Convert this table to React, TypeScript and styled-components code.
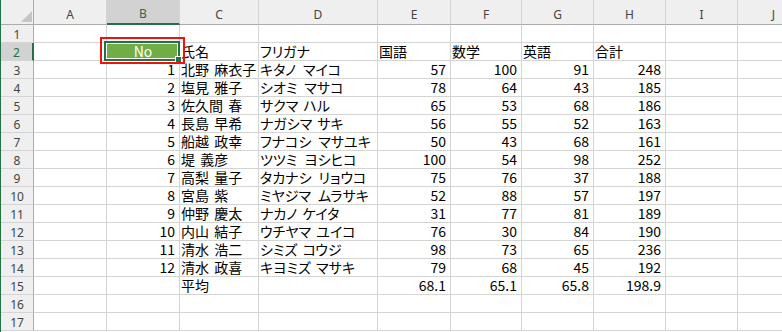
import React from "react";
import styled, { createGlobalStyle, css } from "styled-components";

const GlobalStyle = createGlobalStyle`
  html, body {
    margin: 0;
    padding: 0;
    background: #fff;
    overflow: hidden;
  }
`;

type Row = [string, string, string, string, string, string, string];

const COLS = ["A", "B", "C", "D", "E", "F", "G", "H", "I", "J"];
const WIDTHS = [73, 73, 79, 119, 73, 71, 72, 72, 72, 72];
const ROW_COUNT = 17;

// wide gap between family and given name in some furigana
const W = "\u2002";

const HEAD: Row = ["No", "氏名", "フリガナ", "国語", "数学", "英語", "合計"];

const DATA: Row[] = [
    ["1", "北野 麻衣子", `キタノ${W}マイコ`, "57", "100", "91", "248"],
    ["2", "塩見 雅子", `シオミ${W}マサコ`, "78", "64", "43", "185"],
    ["3", "佐久間 春", "サクマ ハル", "65", "53", "68", "186"],
    ["4", "長島 早希", "ナガシマ サキ", "56", "55", "52", "163"],
    ["5", "船越 政幸", `フナコシ${W}マサユキ`, "50", "43", "68", "161"],
    ["6", "堤 義彦", `ツツミ${W}ヨシヒコ`, "100", "54", "98", "252"],
    ["7", "高梨 量子", `タカナシ${W}リョウコ`, "75", "76", "37", "188"],
    ["8", "宮島 紫", `ミヤジマ${W}ムラサキ`, "52", "88", "57", "197"],
    ["9", "仲野 慶太", "ナカノ ケイタ", "31", "77", "81", "189"],
    ["10", "内山 結子", "ウチヤマ ユイコ", "76", "30", "84", "190"],
    ["11", "清水 浩二", "シミズ コウジ", "98", "73", "65", "236"],
    ["12", "清水 政喜", "キヨミズ マサキ", "79", "68", "45", "192"],
];

const AVERAGE: Row = ["", "平均", "", "68.1", "65.1", "65.8", "198.9"];

const Window = styled.div`
    width: 782px;
    height: 332px;
    overflow: hidden;
    box-sizing: border-box;
    border-left: 1px solid #217346;
    background: #fff;
`;

const Sheet = styled.div`
    display: grid;
    grid-template-columns: 33px ${WIDTHS.map((w) => `${w}px`).join(" ")};
    grid-template-rows: 25px repeat(${ROW_COUNT}, 18px);
    font-family: "Noto Sans CJK JP", sans-serif;
`;

const headerBase = css`
    box-sizing: border-box;
    display: flex;
    align-items: center;
    justify-content: center;
    background: #efefef;
    color: #444;
    font-family: "Noto Sans", sans-serif;
    font-size: 12px;
`;

const Corner = styled.div`
    ${headerBase}
    position: relative;
    border-right: 1px solid #ababab;
    border-bottom: 1px solid #ababab;
`;

const CornerMark = styled.svg`
    position: absolute;
    right: 1px;
    bottom: 2px;
`;

const ColHeader = styled.div<{ $active?: boolean }>`
    ${headerBase}
    padding-top: 4px;
    border-right: 1px solid #d4d4d4;
    border-bottom: 1px solid #ababab;
    ${(p) =>
        p.$active &&
        css`
            background: #d2d2d2;
            color: #217346;
            border-bottom: 2px solid #217346;
        `}
`;

const RowHeader = styled.div<{ $active?: boolean }>`
    ${headerBase}
    padding-top: 2px;
    border-right: 1px solid #ababab;
    border-bottom: 1px solid #d4d4d4;
    ${(p) =>
        p.$active &&
        css`
            background: #d2d2d2;
            color: #217346;
            border-right: 2px solid #217346;
        `}
`;

const Cell = styled.div<{ $right?: boolean }>`
    box-sizing: border-box;
    display: flex;
    align-items: flex-end;
    justify-content: ${(p) => (p.$right ? "flex-end" : "flex-start")};
    padding: ${(p) => (p.$right ? "0 4px 0 0" : "0 0 0 1px")};
    border-right: 1px solid #d4d4d4;
    border-bottom: 1px solid #d4d4d4;
    color: #000;
    font-size: 14px;
    line-height: 17px;
    white-space: pre;
    word-spacing: 2px;
    font-feature-settings: "palt";
`;

const SelectedCell = styled(Cell)`
    position: relative;
    justify-content: center;
    padding: 0;
    background: #70ad47;
    color: #fff;
`;

const SelectionFrame = styled.div`
    position: absolute;
    left: -3px;
    top: -2px;
    right: -1px;
    bottom: -1px;
    border: 2px solid #217346;
    box-shadow: inset 0 0 0 1px #fff;
    z-index: 2;
`;

const FillHandle = styled.div`
    position: absolute;
    right: -4px;
    bottom: -4px;
    width: 5px;
    height: 5px;
    background: #217346;
    border: 1px solid #fff;
`;

const Annotation = styled.div`
    position: absolute;
    left: -7px;
    top: -6px;
    right: -6px;
    bottom: -4px;
    border: 2px solid #f01010;
    z-index: 3;
    pointer-events: none;
`;

const isNumeric = (v: string) => /^[0-9.]+$/.test(v);

const App: React.FC = () => {
    const rows: (Row | null)[] = [null, HEAD, ...DATA, AVERAGE];
    while (rows.length < ROW_COUNT) rows.push(null);

    return (
        <Window>
            <GlobalStyle />
            <Sheet>
                <Corner>
                    <CornerMark width="11" height="11" viewBox="0 0 11 11">
                        <polygon points="11,0 11,11 0,11" fill="#c4c4c4" />
                    </CornerMark>
                </Corner>
                {COLS.map((c) => (
                    <ColHeader key={c} $active={c === "B"}>
                        {c}
                    </ColHeader>
                ))}

                {rows.map((row, i) => {
                    const n = i + 1;
                    return (
                        <React.Fragment key={n}>
                            <RowHeader $active={n === 2}>{n}</RowHeader>
                            <Cell />
                            {n === 2 ? (
                                <SelectedCell>
                                    No
                                    <SelectionFrame>
                                        <FillHandle />
                                    </SelectionFrame>
                                    <Annotation />
                                </SelectedCell>
                            ) : (
                                <Cell $right>{row ? row[0] : ""}</Cell>
                            )}
                            {[1, 2, 3, 4, 5, 6].map((k) => {
                                const v = row ? row[k] : "";
                                return (
                                    <Cell key={k} $right={isNumeric(v)}>
                                        {v}
                                    </Cell>
                                );
                            })}
                            <Cell />
                            <Cell />
                        </React.Fragment>
                    );
                })}
            </Sheet>
        </Window>
    );
};

export default App;
